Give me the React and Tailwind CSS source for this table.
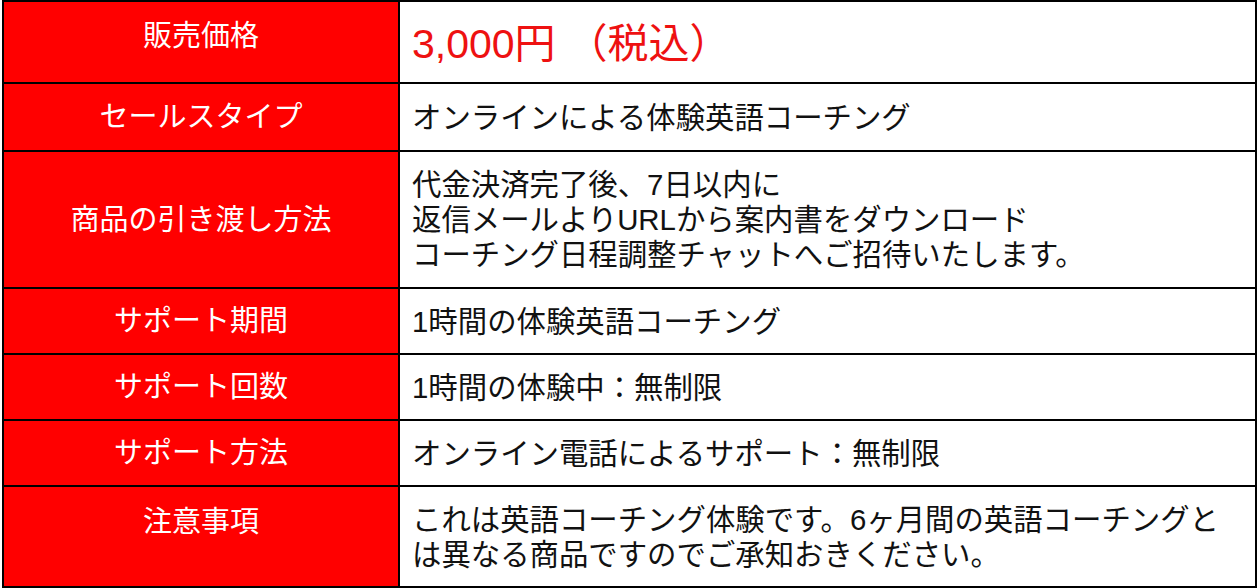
import React from "react";

const font = {
  fontFamily: '"Liberation Sans", "Noto Sans CJK JP", sans-serif',
};

const rows = [
  { label: "販売価格", h: "h-[82px]", labelAlign: "items-start pt-[16px]", price: true },
  { label: "セールスタイプ", h: "h-[68px]", lines: ["オンラインによる体験英語コーチング"] },
  {
    label: "商品の引き渡し方法",
    h: "h-[137px]",
    lines: [
      "代金決済完了後、7日以内に",
      "返信メールよりURLから案内書をダウンロード",
      "コーチング日程調整チャットへご招待いたします。",
    ],
  },
  { label: "サポート期間", h: "h-[66px]", lines: ["1時間の体験英語コーチング"] },
  { label: "サポート回数", h: "h-[66px]", lines: ["1時間の体験中：無制限"] },
  { label: "サポート方法", h: "h-[66px]", lines: ["オンライン電話によるサポート：無制限"] },
  {
    label: "注意事項",
    h: "h-[99px]",
    labelAlign: "items-start pt-[17px]",
    lines: [
      "これは英語コーチング体験です。6ヶ月間の英語コーチングと",
      "は異なる商品ですのでご承知おきください。",
    ],
  },
];

const Row = ({ row, last }) => (
  <div className={`flex ${row.h} ${last ? "" : "border-b-2 border-black"}`}>
    <div
      className={`w-[396px] shrink-0 bg-[#ff0000] border-r-2 border-black flex justify-center ${
        row.labelAlign || "items-center"
      }`}
    >
      <span className="text-white text-[29px] leading-[36px]">{row.label}</span>
    </div>
    <div className="flex-1 bg-white flex flex-col justify-center pl-[12px]">
      {row.price ? (
        <div className="text-[#ee1111] text-[41px] leading-[48px] pt-[4px] flex">
          <span>3,000円</span>
          <span className="ml-[11px]">（税込）</span>
        </div>
      ) : (
        row.lines.map((l) => (
          <span key={l} className="text-[#111] text-[29.4px] leading-[35px]">
            {l}
          </span>
        ))
      )}
    </div>
  </div>
);

const App = () => {
  return (
    <div className="w-[1260px] h-[588px] bg-white overflow-hidden" style={font}>
      <div className="ml-[2px] w-[1255px] border-2 border-black flex flex-col">
        {rows.map((r, i) => (
          <Row key={r.label} row={r} last={i === rows.length - 1} />
        ))}
      </div>
    </div>
  );
};

export default App;
